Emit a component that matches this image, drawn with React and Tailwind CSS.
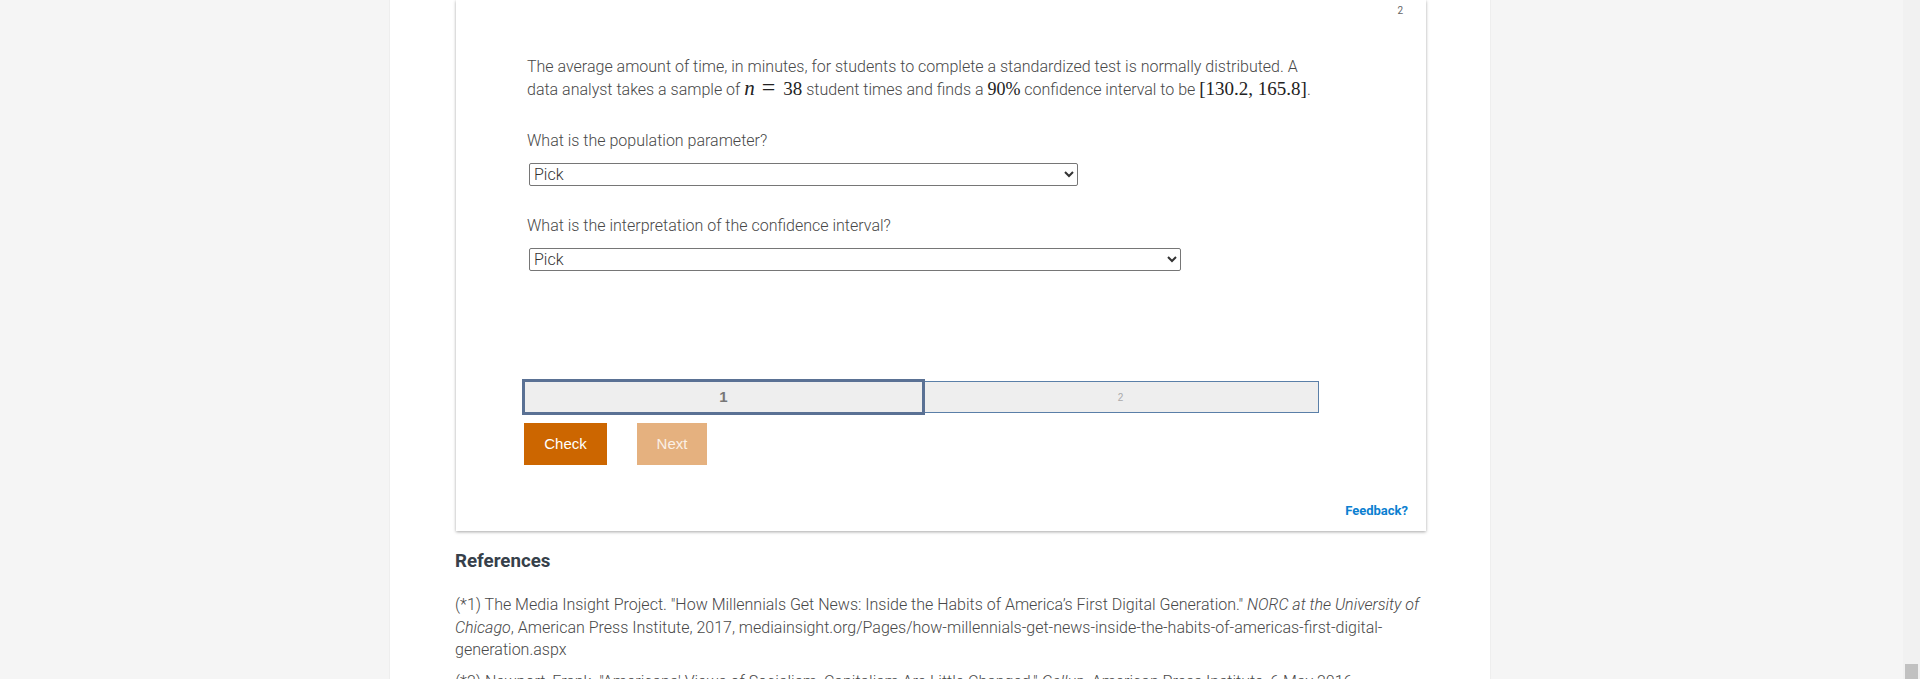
import React from "react";

const mathFont = "font-['Liberation_Serif',serif] text-[#222] leading-[0]";
const bodyText = "text-[16px] font-light text-[#484848]";

const Pick = ({ width }) => (
  <select className={`${width} h-[23px] ml-[2px] block bg-white border border-[#767676] rounded-[2px] text-[16px] font-light text-[#333] font-['Roboto',sans-serif] appearance-auto`}>
    <option>Pick</option>
  </select>
);

const App = () => {
  return (
    <div className="h-[679px] overflow-hidden flex bg-[#f5f5f5] font-['Roboto',sans-serif]">
      <div className="flex-1 flex justify-center">
        <div className="w-[1102px] ml-[-23px] bg-white border-x border-[#eeeeee] pl-[66px] pr-[64px]">
          {/* question card */}
          <div className="h-[531px] bg-white shadow-[0_1px_3px_rgba(0,0,0,0.35)] pt-[5px] pl-[71px]">
            <div className="h-[12px] flex justify-end pr-[23px] text-[10px] leading-[12px] text-[#666]">2</div>
            <p className={`mt-[38px] w-[800px] leading-[23px] ${bodyText}`}>
              The average amount of time, in minutes, for students to complete a standardized test is normally distributed. A
              <br />
              data analyst takes a sample of{" "}
              <span className={mathFont}>
                <i className="text-[21px]">n</i>
                <span className="ml-[7px] text-[24px]">=</span>
                <span className="ml-[8px] text-[19px]">38</span>
              </span>{" "}
              student times and finds a <span className={`${mathFont} text-[18px]`}>90%</span> confidence interval to be{" "}
              <span className={`${mathFont} text-[19px]`}>[130.2, 165.8]</span>.
            </p>
            <p className={`mt-[28px] leading-[23px] ${bodyText}`}>What is the population parameter?</p>
            <div className="mt-[11px]">
              <Pick width="w-[549px]" />
            </div>
            <p className={`mt-[28px] leading-[23px] ${bodyText}`}>What is the interpretation of the confidence interval?</p>
            <div className="mt-[11px]">
              <Pick width="w-[652px]" />
            </div>

            {/* step tabs */}
            <div className="mt-[108px] ml-[-5px] flex items-center w-[797px]">
              <div className="w-[403px] h-[36px] bg-[#eee] border-[3px] border-[#5a7194] flex items-center justify-center text-[15px] font-bold text-[#777] font-['Liberation_Sans',sans-serif]">1</div>
              <div className="flex-1 h-[32px] bg-[#eee] border border-l-0 border-[#5a7fa8] flex items-center justify-center text-[10px] pr-[2px] text-[#aaa] font-['Liberation_Sans',sans-serif]">2</div>
            </div>

            <div className="mt-[8px] ml-[-3px] flex gap-[30px] font-['Liberation_Sans',sans-serif] text-[15px]">
              <button className="w-[83px] h-[42px] bg-[#cc6600] text-white">Check</button>
              <button className="w-[70px] h-[42px] bg-[#e5b17f] text-[#fbf0e6]">Next</button>
            </div>

            <div className="mt-[37px] flex justify-end pr-[18px] text-[13px] leading-[18px] font-bold text-[#0b7fd1]">Feedback?</div>
          </div>

          {/* references */}
          <h2 className="mt-[18px] ml-[-1px] text-[18.72px] leading-[24px] font-bold text-[#36404a]">References</h2>
          <p className={`mt-[21px] ml-[-1px] leading-[22.5px] ${bodyText}`}>
            (*1) The Media Insight Project. "How Millennials Get News: Inside the Habits of America’s First Digital Generation." <i>NORC at the University of Chicago</i>, American Press Institute, 2017, mediainsight.org/Pages/how-millennials-get-news-inside-the-habits-of-americas-first-digital-generation.aspx
          </p>
          <p className={`mt-[9px] ml-[-1px] leading-[22.5px] ${bodyText}`}>
            (*2) Newport, Frank. "Americans' Views of Socialism, Capitalism Are Little Changed." <i>Gallup</i>, American Press Institute, 6 May 2016
          </p>
        </div>
      </div>

      {/* page scrollbar */}
      <div className="w-[17px] shrink-0 bg-[#f1f1f1] flex flex-col justify-end items-center">
        <div className="w-[13px] h-[15px] bg-[#c1c1c1]"></div>
      </div>
    </div>
  );
};

export default App;
